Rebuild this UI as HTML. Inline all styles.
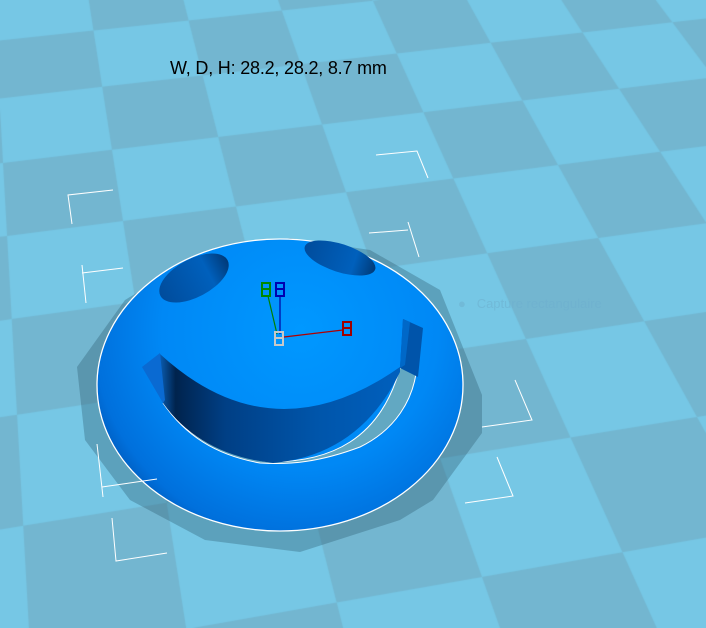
<!DOCTYPE html>
<html><head><meta charset="utf-8"><style>
html,body{margin:0;padding:0;width:706px;height:628px;overflow:hidden;background:#76c7e5}
#c{position:absolute;left:0;top:0}
svg{position:absolute;left:0;top:0}
.t{position:absolute;left:170px;top:58px;font:18px "Liberation Sans",sans-serif;letter-spacing:-0.2px;color:#000;white-space:nowrap}
.cap{position:absolute;left:458px;top:296px;font:13px "Liberation Sans",sans-serif;color:rgba(110,175,205,0.55);white-space:nowrap}
</style></head><body>
<canvas id="c" width="706" height="628"></canvas>
<svg width="706" height="628" viewBox="0 0 706 628">
<defs>
<radialGradient id="ball" cx="300" cy="330" r="230" gradientUnits="userSpaceOnUse">
<stop offset="0" stop-color="#0098ff"/><stop offset="0.6" stop-color="#0088f5"/><stop offset="0.9" stop-color="#0070dc"/><stop offset="1" stop-color="#0058b8"/></radialGradient>
<linearGradient id="wall" x1="160" y1="0" x2="420" y2="0" gradientUnits="userSpaceOnUse">
<stop offset="0" stop-color="#0a5cb0"/><stop offset="0.06" stop-color="#00234d"/><stop offset="0.25" stop-color="#003f85"/><stop offset="0.6" stop-color="#0055aa"/><stop offset="1" stop-color="#0062c2"/></linearGradient>
<linearGradient id="eye" x1="0" y1="0" x2="1" y2="0">
<stop offset="0" stop-color="#004c9c"/><stop offset="0.7" stop-color="#0060bc"/><stop offset="1" stop-color="#003a78"/></linearGradient>
</defs>
<path d="M125,300 L200,255 L290,238 L370,250 L440,290 L482,395 L482,433 L433,500 L400,520 L300,552 L205,540 L130,500 L85,440 L77,367 Z" fill="rgba(40,85,105,0.33)"/>
<ellipse cx="280" cy="385" rx="183" ry="146" fill="url(#ball)" stroke="#fff" stroke-width="1.3"/>
<ellipse cx="194" cy="278" rx="38" ry="19" transform="rotate(-28 194 278)" fill="url(#eye)"/>
<ellipse cx="340" cy="258" rx="37" ry="14" transform="rotate(18 340 258)" fill="url(#eye)"/>
<path d="M163,403 C185,435 220,455 270,462 C330,462 380,440 400,368 L417,366 C414,400 395,430 360,447 C320,462 290,465 260,463 C215,455 185,435 163,403 Z" fill="#62a8c2" stroke="#fff" stroke-width="1"/>
<path d="M160,354 Q272,457 400,367 L400,372 Q360,455 273,463 Q200,455 163,403 Z" fill="url(#wall)"/>
<path d="M142,367 L160,353 L165,400 L163,403 Z" fill="#0a6ad2"/>
<path d="M403,319 L423,328 L418,377 L400,368 Z" fill="#0054aa"/>
<path d="M403,319 L410,322 L405,365 L400,368 Z" fill="#0068c8"/>
<line x1="280" y1="295" x2="280" y2="334" stroke="#0000a0" stroke-width="1.2"/>
<line x1="268" y1="296" x2="277" y2="334" stroke="#008000" stroke-width="1.2"/>
<line x1="284" y1="337" x2="343" y2="330" stroke="#b00000" stroke-width="1.2"/>
<g fill="none" stroke-width="2">
<rect x="262" y="283" width="8" height="13" stroke="#008800"/><line x1="262" y1="289" x2="270" y2="289" stroke="#008800"/>
<rect x="276" y="283" width="8" height="13" stroke="#0000b0"/><line x1="276" y1="289" x2="284" y2="289" stroke="#0000b0"/>
<rect x="275" y="332" width="8" height="13" stroke="#c8c8c8"/><line x1="275" y1="338" x2="283" y2="338" stroke="#c8c8c8"/>
<rect x="343" y="322" width="8" height="13" stroke="#a00000"/><line x1="343" y1="328" x2="351" y2="328" stroke="#a00000"/>
</g>
<g stroke="#fff" stroke-width="1" fill="none">
<polyline points="113,190 68,195 72,224"/>
<polyline points="376,155 417,151 428,178"/>
<line x1="82" y1="273" x2="123" y2="268"/><line x1="82" y1="265" x2="86" y2="303"/>
<line x1="369" y1="233" x2="408" y2="230"/><line x1="408" y1="222" x2="419" y2="257"/>
<polyline points="515,380 532,420 482,427"/>
<polyline points="497,457 513,496 465,503"/>
<line x1="97" y1="444" x2="103" y2="497"/><line x1="102" y1="487" x2="157" y2="479"/>
<polyline points="112,518 116,561 167,553"/>
</g>
</svg>
<div class="t">W, D, H: 28.2, 28.2, 8.7 mm</div>
<div class="cap">&#9679;&nbsp;&nbsp;&nbsp;Capture rectangulaire</div>
<script>
(function(){
var src=[[0,3],[4,3],[2,7],[4,6]],dst=[[123,221],[558,165],[482,577],[697,417]];
var A=[],b=[];
for(var i=0;i<4;i++){var u=src[i][0],v=src[i][1],x=dst[i][0],y=dst[i][1];
A.push([u,v,1,0,0,0,-u*x,-v*x]);b.push(x);
A.push([0,0,0,u,v,1,-u*y,-v*y]);b.push(y);}
var n=8;for(var c=0;c<n;c++){var p=c;for(var r=c+1;r<n;r++)if(Math.abs(A[r][c])>Math.abs(A[p][c]))p=r;
var t=A[c];A[c]=A[p];A[p]=t;t=b[c];b[c]=b[p];b[p]=t;
for(var r=0;r<n;r++){if(r==c)continue;var f=A[r][c]/A[c][c];for(var k=c;k<n;k++)A[r][k]-=f*A[c][k];b[r]-=f*b[c];}}
var h=[];for(var i=0;i<n;i++)h.push(b[i]/A[i][i]);
function P(u,v){var w=h[6]*u+h[7]*v+1;return[(h[0]*u+h[1]*v+h[2])/w,(h[3]*u+h[4]*v+h[5])/w];}
var ctx=document.getElementById('c').getContext('2d');
ctx.fillStyle='#76c7e5';ctx.fillRect(0,0,706,628);
ctx.fillStyle='#73b6d0';
for(var u=-8;u<20;u++)for(var v=-6;v<14;v++){
if(((u+v)%2+2)%2==0)continue;
var a=P(u,v),b1=P(u+1,v),c1=P(u+1,v+1),d=P(u,v+1);
ctx.beginPath();ctx.moveTo(a[0],a[1]);ctx.lineTo(b1[0],b1[1]);ctx.lineTo(c1[0],c1[1]);ctx.lineTo(d[0],d[1]);ctx.closePath();ctx.fill();}
})();
</script>
</body></html>
